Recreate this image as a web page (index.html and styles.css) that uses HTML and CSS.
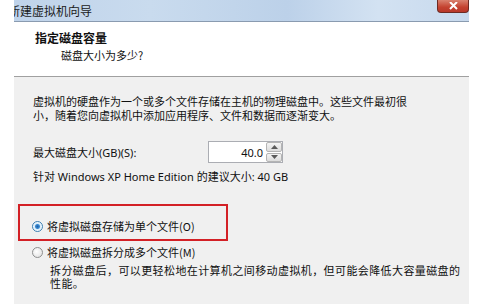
FILE: index.html
```html
<!DOCTYPE html>
<html lang="zh-CN">
<head>
<meta charset="utf-8">
<title>新建虚拟机向导</title>
<link rel="stylesheet" href="styles.css">
</head>
<body>
<div class="dialog">
  <div class="titlebar">
    <span class="title">新建虚拟机向导</span>
    <div class="close"><svg width="11" height="8" viewBox="0 0 11 8"><path d="M2 0 L9 7 M9 0 L2 7" stroke="#fff" stroke-width="2"/></svg></div>
  </div>
  <div class="header">
    <div class="h-title">指定磁盘容量</div>
    <div class="h-sub">磁盘大小为多少?</div>
  </div>
  <div class="content">
    <p class="intro">虚拟机的硬盘作为一个或多个文件存储在主机的物理磁盘中。这些文件最初很<br>小，随着您向虚拟机中添加应用程序、文件和数据而逐渐变大。</p>
    <div class="size-row">
      <span class="size-label">最大磁盘大小(GB)(S):</span>
      <div class="spinner">
        <span class="spin-value">40.0</span>
        <div class="spin-buttons">
          <div class="spin-btn"><svg width="7" height="4" viewBox="0 0 7 4"><path d="M0 4 L3.5 0 L7 4 Z" fill="#5a5a5a"/></svg></div>
          <div class="spin-btn"><svg width="7" height="4" viewBox="0 0 7 4"><path d="M0 0 L3.5 4 L7 0 Z" fill="#5a5a5a"/></svg></div>
        </div>
      </div>
    </div>
    <div class="hint">针对 Windows XP Home Edition 的建议大小: 40 GB</div>
    <div class="options">
      <div class="highlight"></div>
      <label class="radio-row"><span class="radio checked"></span><span>将虚拟磁盘存储为单个文件(O)</span></label>
      <label class="radio-row second"><span class="radio"></span><span>将虚拟磁盘拆分成多个文件(M)</span></label>
      <p class="desc">拆分磁盘后，可以更轻松地在计算机之间移动虚拟机，但可能会降低大容量磁盘的<br>性能。</p>
    </div>
  </div>
</div>
</body>
</html>
```
FILE: styles.css
```css
html, body {
  margin: 0;
  padding: 0;
  background: #ffffff;
}
body {
  font-family: "Noto Sans", "Noto Sans CJK SC", sans-serif;
  font-size: 11px;
  color: #111;
  overflow: hidden;
}
.dialog {
  margin-left: 14px;
  width: 455px;
  height: 304px;
  display: flex;
  flex-direction: column;
}
.titlebar {
  height: 22px;
  box-sizing: border-box;
  border-bottom: 1px solid #8a9bb0;
  background: linear-gradient(to right, #bfd3ea 0%, #c9dbee 30%, #bcd1e9 60%, #d3e2f2 80%, #c7d9ed 100%);
  display: flex;
  align-items: flex-start;
  overflow: hidden;
  position: relative;
}
.title {
  font-size: 12px;
  line-height: 14px;
  margin-top: 4px;
  margin-left: -6px;
  color: #1a1a1a;
  white-space: nowrap;
  font-family: "Noto Sans CJK SC", sans-serif;
}
.close {
  position: absolute;
  right: 0;
  top: 0;
  width: 32px;
  height: 13px;
  box-sizing: border-box;
  background: linear-gradient(to bottom, #d9826f, #c4422f 60%, #b8382a);
  border: 1px solid #6d2a22;
  border-top: none;
  border-radius: 0 0 4px 4px;
  display: flex;
  justify-content: center;
  align-items: center;
}
.header {
  height: 55px;
  box-sizing: border-box;
  background: #ffffff;
  border-bottom: 1px solid #a0a0a0;
  padding: 8px 0 0 21px;
  font-family: "Noto Sans CJK SC", sans-serif;
}
.h-title {
  font-size: 12px;
  font-weight: bold;
  line-height: 16px;
}
.h-sub {
  font-size: 11px;
  line-height: 14px;
  margin-top: 2px;
  padding-left: 26px;
}
.content {
  flex: 1;
  background: #f0f0f0;
  padding: 17px 0 0 19px;
  box-sizing: border-box;
}
.intro {
  margin: 0;
  line-height: 14px;
  white-space: nowrap;
  font-family: "Noto Sans CJK SC", sans-serif;
}
.size-row {
  display: flex;
  align-items: center;
  margin-top: 19px;
  height: 22px;
}
.size-label {
  width: 175px;
}
.spinner {
  width: 75px;
  height: 22px;
  box-sizing: border-box;
  border: 1px solid #abadb3;
  background: #fff;
  display: flex;
  align-items: center;
}
.spin-value {
  flex: 1;
  text-align: right;
  padding-right: 3px;
  font-size: 11px;
}
.spin-buttons {
  width: 16px;
  height: 20px;
  display: flex;
  flex-direction: column;
  gap: 1px;
}
.spin-btn {
  flex: 1;
  background: linear-gradient(#f4f4f4, #dcdcdc);
  border: 1px solid #b4b4b4;
  border-radius: 2px;
  display: flex;
  justify-content: center;
  align-items: center;
  box-sizing: border-box;
}
.hint {
  margin-top: 7px;
  line-height: 14px;
}
.options {
  position: relative;
  margin-top: 20px;
  margin-left: -1px;
  padding-top: 15px;
}
.highlight {
  position: absolute;
  left: -14px;
  top: 0;
  width: 210px;
  height: 37px;
  box-sizing: border-box;
  border: 2px solid #d32026;
}
.radio-row {
  display: flex;
  align-items: center;
  height: 14px;
  gap: 4px;
  font-family: "Noto Sans CJK SC", sans-serif;
}
.radio-row.second {
  margin-top: 12px;
}
.radio {
  width: 11px;
  height: 11px;
  box-sizing: border-box;
  border-radius: 50%;
  border: 1px solid #8e8f8f;
  background: radial-gradient(circle at 40% 40%, #ffffff, #dcdcdc);
  display: inline-block;
}
.radio.checked {
  border-color: #3c7fb1;
  background: radial-gradient(circle, #1f5fa8 0, #3a8ad0 2px, #d8ecfb 3px, #ffffff 5px);
}
.desc {
  margin: 5px 0 0 18px;
  line-height: 13px;
  white-space: nowrap;
  letter-spacing: 0.4px;
  font-family: "Noto Sans CJK SC", sans-serif;
}
```
